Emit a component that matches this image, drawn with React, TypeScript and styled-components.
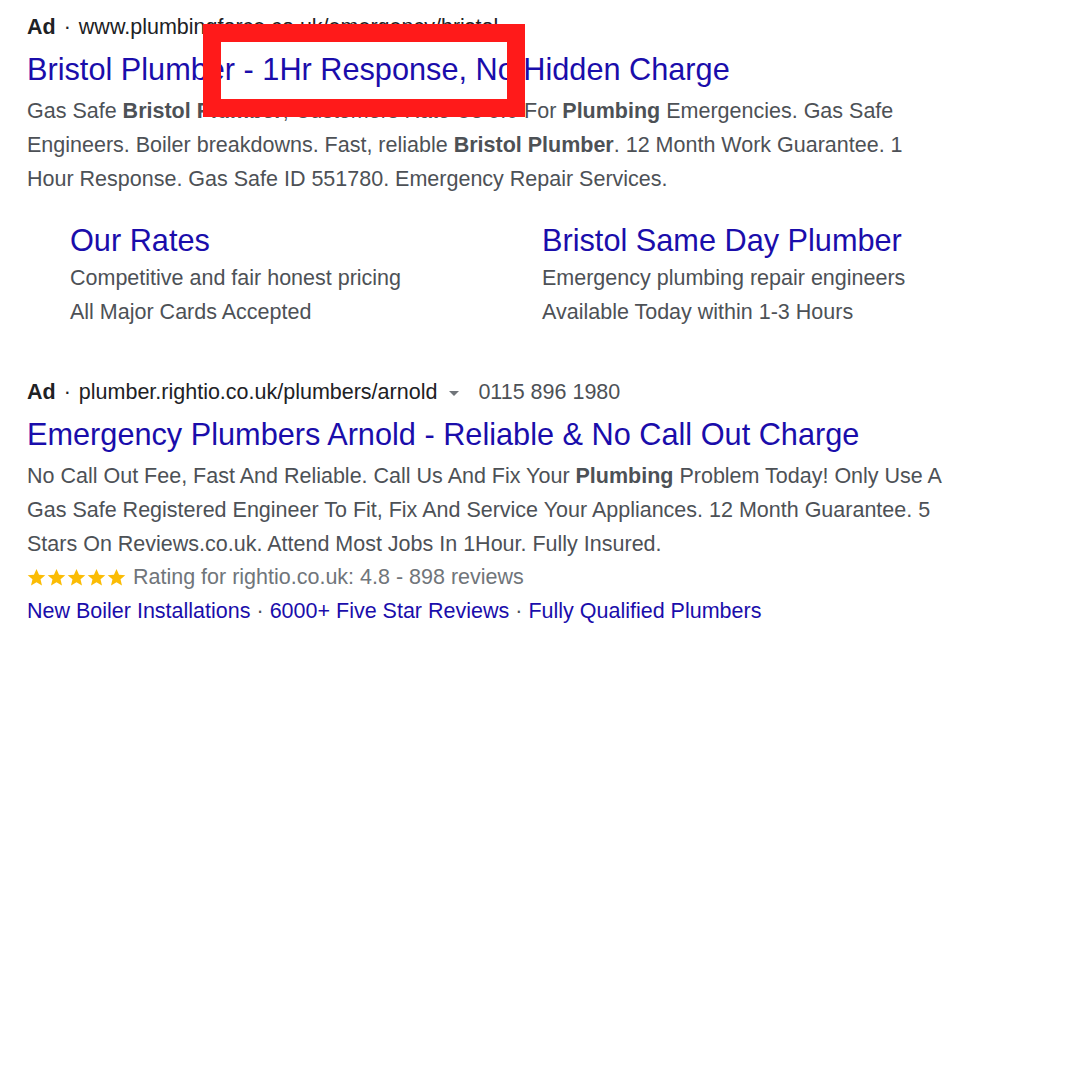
import React from "react";
import styled, { createGlobalStyle } from "styled-components";

const GlobalStyle = createGlobalStyle`
  html, body {
    margin: 0;
    padding: 0;
    background: #ffffff;
  }
  body {
    font-family: "Liberation Sans", Arial, sans-serif;
    -webkit-font-smoothing: antialiased;
  }
`;

const Page = styled.div`
  position: relative;
  width: 1080px;
  min-height: 1080px;
  box-sizing: border-box;
  padding: 10.5px 0 0 27px;
  background: #ffffff;
`;

const AdBlock = styled.section<{ $gap?: number }>`
  margin-top: ${(p) => p.$gap ?? 0}px;
  max-width: 922px;
`;

const AdLine = styled.div`
  display: flex;
  align-items: center;
  height: 34px;
  font-size: 21.5px;
  color: #202124;
  white-space: nowrap;
`;

const AdLabel = styled.span`
  font-weight: 700;
  color: #202124;
`;

const Dot = styled.span`
  padding: 0 8px 0 8px;
  color: #202124;
`;

const Url = styled.span`
  color: #202124;
`;

const Caret = styled.span`
  display: inline-block;
  width: 0;
  height: 0;
  margin: 2px 19px 0 12px;
  border-left: 5px solid transparent;
  border-right: 5px solid transparent;
  border-top: 5px solid #70757a;
`;

const Phone = styled.span`
  color: #4d5156;
`;

const Title = styled.a`
  display: block;
  margin-top: 5px;
  font-size: 30.7px;
  line-height: 40px;
  color: #1a0dab;
  text-decoration: none;
  white-space: nowrap;
`;

const Description = styled.p`
  margin: 4px 0 0;
  font-size: 21.5px;
  line-height: 34px;
  color: #4d5156;

  b {
    font-weight: 700;
    color: #4d5156;
  }
`;

const Sitelinks = styled.div`
  display: grid;
  grid-template-columns: 472px 1fr;
  margin-top: 25px;
  padding-left: 43px;
`;

const Sitelink = styled.div`
  display: flex;
  flex-direction: column;
`;

const SitelinkTitle = styled.a`
  font-size: 30.7px;
  line-height: 40px;
  color: #1a0dab;
  text-decoration: none;
  white-space: nowrap;
`;

const SitelinkText = styled.div`
  font-size: 21.5px;
  line-height: 34px;
  color: #4d5156;
  white-space: nowrap;
`;

const RatingRow = styled.div`
  display: flex;
  align-items: center;
  height: 34px;
  font-size: 21.5px;
  color: #70757a;
`;

const Stars = styled.span`
  display: inline-flex;
  gap: 1px;
  margin-right: 7px;
`;

const LinkRow = styled.div`
  display: flex;
  align-items: center;
  height: 34px;
  font-size: 21.5px;
  white-space: nowrap;
`;

const Link = styled.a`
  color: #1a0dab;
  text-decoration: none;
`;

const LinkSep = styled.span`
  color: #4d5156;
  padding: 0 6px;
`;

const RedFrame = styled.div`
  position: absolute;
  left: 203px;
  top: 24px;
  width: 322px;
  height: 93px;
  box-sizing: border-box;
  border: 18.5px solid #ff1a1a;
  pointer-events: none;
`;

const Star = () => (
  <svg width="19" height="19" viewBox="0 0 24 24" aria-hidden="true">
    <path
      d="M12 1.2l3.2 7.2 7.9.7-6 5.2 1.8 7.8L12 18l-6.9 4.1 1.8-7.8-6-5.2 7.9-.7z"
      fill="#fbbc04"
    />
  </svg>
);

export default function App() {
  return (
    <>
      <GlobalStyle />
      <Page>
        <AdBlock>
          <AdLine>
            <AdLabel>Ad</AdLabel>
            <Dot>·</Dot>
            <Url>www.plumbingforce.co.uk/emergency/bristol</Url>
          </AdLine>
          <Title href="#">Bristol Plumber - 1Hr Response, No Hidden Charge</Title>
          <Description>
            Gas Safe <b>Bristol Plumber</b>, Customers Rate Us 5.0 For <b>Plumbing</b>{" "}
            Emergencies. Gas Safe Engineers. Boiler breakdowns. Fast, reliable{" "}
            <b>Bristol Plumber</b>. 12 Month Work Guarantee. 1 Hour Response. Gas Safe ID
            551780. Emergency Repair Services.
          </Description>
          <Sitelinks>
            <Sitelink>
              <SitelinkTitle href="#">Our Rates</SitelinkTitle>
              <SitelinkText>Competitive and fair honest pricing</SitelinkText>
              <SitelinkText>All Major Cards Accepted</SitelinkText>
            </Sitelink>
            <Sitelink>
              <SitelinkTitle href="#">Bristol Same Day Plumber</SitelinkTitle>
              <SitelinkText>Emergency plumbing repair engineers</SitelinkText>
              <SitelinkText>Available Today within 1-3 Hours</SitelinkText>
            </Sitelink>
          </Sitelinks>
        </AdBlock>

        <AdBlock $gap={47}>
          <AdLine>
            <AdLabel>Ad</AdLabel>
            <Dot>·</Dot>
            <Url>plumber.rightio.co.uk/plumbers/arnold</Url>
            <Caret />
            <Phone>0115 896 1980</Phone>
          </AdLine>
          <Title href="#">Emergency Plumbers Arnold - Reliable &amp; No Call Out Charge</Title>
          <Description>
            No Call Out Fee, Fast And Reliable. Call Us And Fix Your <b>Plumbing</b> Problem
            Today! Only Use A Gas Safe Registered Engineer To Fit, Fix And Service Your
            Appliances. 12 Month Guarantee. 5 Stars On Reviews.co.uk. Attend Most Jobs In
            1Hour. Fully Insured.
          </Description>
          <RatingRow>
            <Stars>
              <Star />
              <Star />
              <Star />
              <Star />
              <Star />
            </Stars>
            Rating for rightio.co.uk: 4.8 - 898 reviews
          </RatingRow>
          <LinkRow>
            <Link href="#">New Boiler Installations</Link>
            <LinkSep>·</LinkSep>
            <Link href="#">6000+ Five Star Reviews</Link>
            <LinkSep>·</LinkSep>
            <Link href="#">Fully Qualified Plumbers</Link>
          </LinkRow>
        </AdBlock>

        <RedFrame />
      </Page>
    </>
  );
}
